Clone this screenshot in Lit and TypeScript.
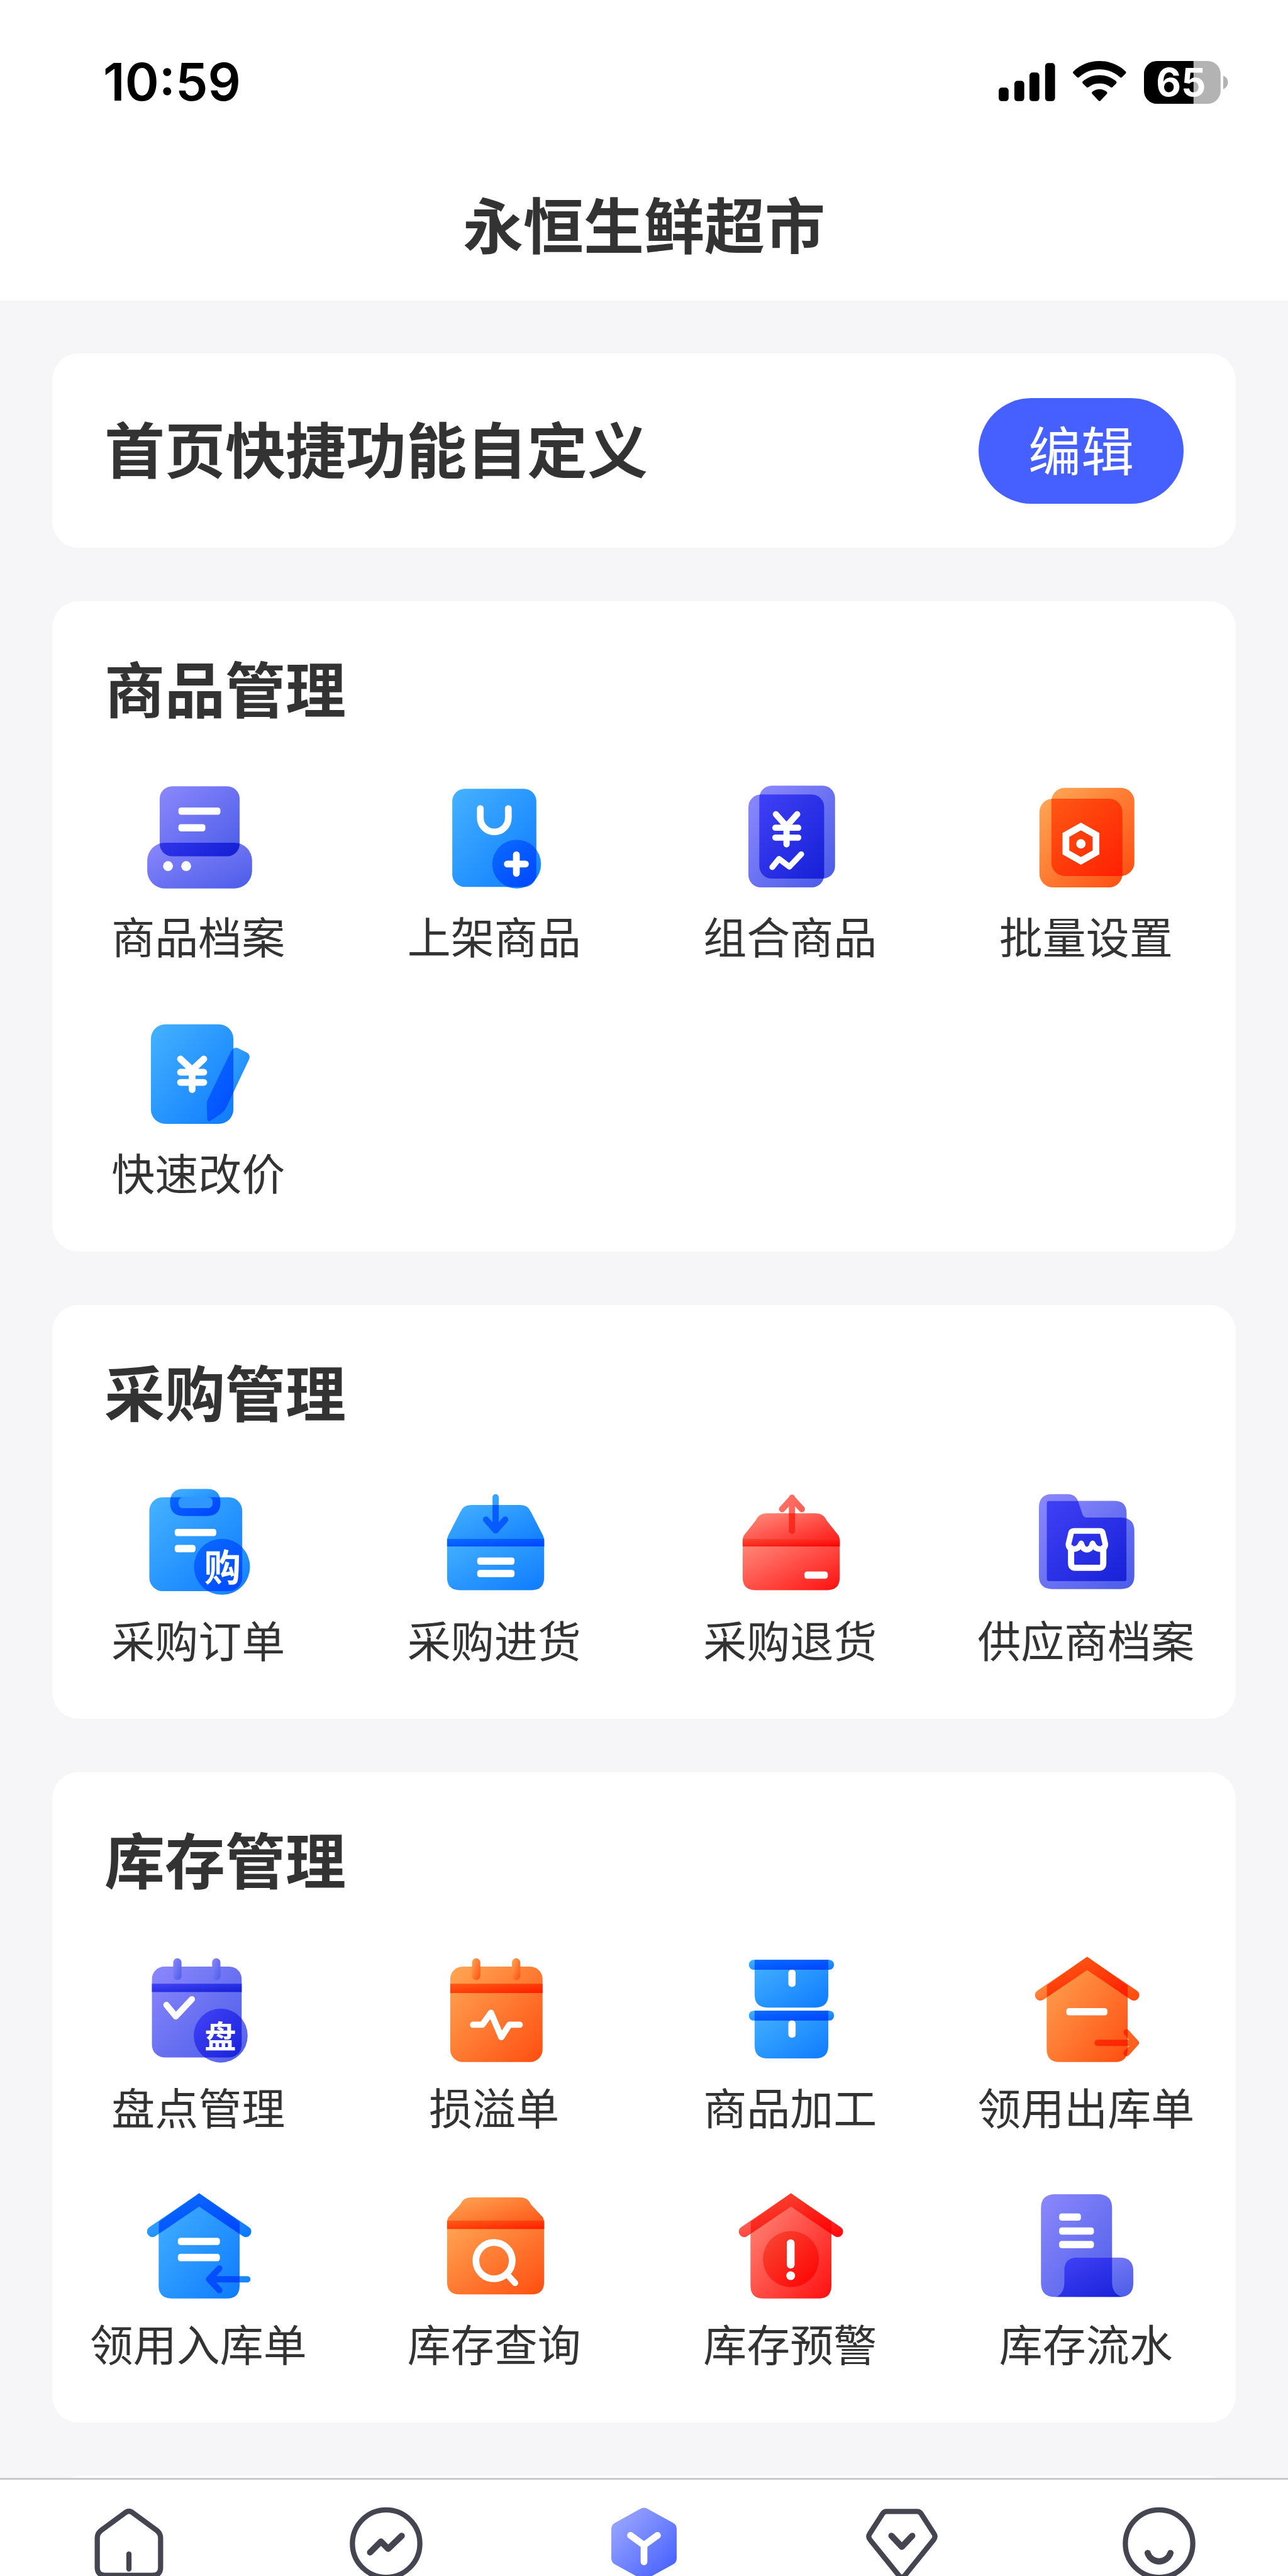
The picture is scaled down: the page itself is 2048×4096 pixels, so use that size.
import { LitElement, html, svg, css } from "lit";
import { customElement, property } from "lit/decorators.js";

/* ---------- Shared icon helpers ---------- */

type Tone = "blue" | "purple" | "orange" | "red";

const TONES: Record<Tone, [string, string, string, string]> = {
  // light start, light end, overlap start, overlap end
  blue: ["#45b2ff", "#0d7bff", "#0a6cff", "#0044ff"],
  purple: ["#8c88fc", "#4a5ce8", "#4343f8", "#141fd4"],
  orange: ["#ffa755", "#ff4e10", "#ff5c16", "#ff1c00"],
  red: ["#ff9080", "#ff1010", "#f64a36", "#ff0000"],
};

/* The part of `front` that lies over `back` is painted with the deep gradient. */
const overlay = (back: unknown, front: unknown, id: string) => svg`
  <clipPath id="clip-${id}">${back}</clipPath>
  <g fill="url(#light)">${front}</g>
  <g clip-path="url(#clip-${id})" fill="url(#deep)">${front}</g>`;

const layered = (back: unknown, front: unknown) => svg`
  <g fill="url(#light)">${back}</g>
  ${overlay(back, front, "a")}`;

const rect = (x: number, y: number, w: number, h: number, r = 0) =>
  svg`<rect x=${x} y=${y} width=${w} height=${h} rx=${r}></rect>`;

const circle = (x: number, y: number, r: number) =>
  svg`<circle cx=${x} cy=${y} r=${r}></circle>`;

const bar = (x1: number, x2: number, y: number) =>
  svg`<rect x=${x1} y=${y - 7} width=${x2 - x1} height="14" rx="5" fill="#fff"></rect>`;

const stroke = (d: string, w = 12) =>
  svg`<path d=${d} fill="none" stroke="#fff" stroke-width=${w} stroke-linecap="round" stroke-linejoin="round"></path>`;

const boxIcon = (top: number, bandTop: number, bandBottom: number, bottom: number) => {
  const lid = svg`<path d="M29 ${bandBottom}V${bandTop + 4}Q29 ${bandTop - 1} 31 ${bandTop - 6}L54 ${top + 14}Q60 ${top} 75 ${top}H170Q185 ${top} 191 ${top + 14}L214 ${bandTop - 6}Q216 ${bandTop - 1} 216 ${bandTop + 4}V${bandBottom}Z"></path>`;
  const body = svg`<path d="M29 ${bandTop}H216V${bottom - 24}Q216 ${bottom} 192 ${bottom}H53Q29 ${bottom} 29 ${bottom - 24}Z"></path>`;
  return svg`<g fill="url(#light)">${lid}${body}</g>
    <path d="M29 ${bandTop}H216V${bandBottom}H29Z" fill="url(#deep)"></path>`;
};

const houseBody = svg`<path d="M122 21L200 76V199Q200 224 175 224H69Q44 224 44 199V76Z"></path>`;
const ROOF = "M32 95L122 34L212 95";

const house = svg`
  <clipPath id="clip-house">${houseBody}</clipPath>
  <path d=${ROOF} fill="none" stroke="url(#light)" stroke-width="21" stroke-linecap="round"></path>
  <g fill="url(#light)">${houseBody}</g>
  <path d=${ROOF} clip-path="url(#clip-house)" fill="none" stroke="url(#deep)" stroke-width="21" stroke-linecap="round"></path>`;

const calendar = (x: number, w: number, bottom: number, band: number, p1: number, p2: number) => svg`
  <g fill="url(#light)">
    ${rect(x, 40, w, bottom - 40, 24)}
    ${rect(p1 - 8, 24, 16, 42, 8)}
    ${rect(p2 - 8, 24, 16, 42, 8)}
  </g>
  <rect x=${x} y="73" width=${w} height=${band} fill="url(#deep)"></rect>`;

const arrow = (d: string, clip: unknown) => svg`
  <clipPath id="clip-arrow">${clip}</clipPath>
  <path d=${d} fill="none" stroke="url(#flat)" stroke-width="12" stroke-linecap="round" stroke-linejoin="round"></path>
  <path d=${d} clip-path="url(#clip-arrow)" fill="none" stroke="url(#flatDeep)" stroke-width="12" stroke-linecap="round" stroke-linejoin="round"></path>`;

const orderBoard = rect(26, 36, 179, 181, 26);

const ICONS: Record<string, [Tone, unknown]> = {
  archive: ["purple", svg`
    ${layered(rect(22, 131, 202, 88, 34), rect(46, 22, 154, 135, 24))}
    ${bar(82, 163, 70)}${bar(82, 134, 102)}
    <circle cx="62" cy="176" r="9.5" fill="#fff"></circle>
    <circle cx="97" cy="176" r="9.5" fill="#fff"></circle>`],
  shelve: ["blue", svg`
    ${layered(rect(39, 27, 162, 189, 24), circle(163, 172, 47))}
    ${stroke("M93 65V83A27 27 0 0 0 147 83V65", 13)}
    ${stroke("M145 172H180M162.500 154V190", 13)}`],
  combo: ["purple", svg`
    ${layered(rect(61, 21, 146, 179, 24), rect(40, 38, 146, 179, 24))}
    ${stroke("M93 76L113.500 99L134 76M92 102H136M92 121H136M113.500 99V134", 12)}
    ${stroke("M86 178L99 162L119 177L142 153", 11)}`],
  batch: ["orange", svg`
    ${layered(rect(53, 25, 160, 170, 26), rect(30, 46, 160, 171, 26))}
    <path d="M110 99.500L139 116V149.500L110 166L81 149.500V116Z" fill="none" stroke="#fff" stroke-width="13"></path>
    <circle cx="110" cy="133" r="9" fill="#fff"></circle>`],
  reprice: ["blue", svg`
    ${layered(rect(29, 25, 159, 192, 28), svg`<path d="M138 171L183 78Q188 67 199 72L213 79Q222 84 218 93L174 186Q171 192 166 196L146 210Q138 216 137.500 206L136.500 179Q136.500 174 138 171Z"></path>`)}
    ${stroke("M86 92L108.500 113L131 92M86 117.500H131M86 137H131M108.500 113V151", 13)}`],
  order: ["blue", svg`
    ${layered(orderBoard, svg`<path fill-rule="evenodd" d="M92 20H137Q163 20 163 46Q163 72 137 72H92Q66 72 66 46Q66 20 92 20ZM92 37Q82 37 82 47Q82 57 92 57H138Q148 57 148 47Q148 37 138 37Z"></path>`)}
    <path d="M92 35H138Q150 37 148 47Q148 57 138 57H92Q82 57 82 47Q82 37 92 35Z" fill="#2f96ff"></path>
    ${bar(75, 155, 104)}${bar(75, 115, 135)}
    ${overlay(orderBoard, circle(166, 170, 54), "b")}
    <text x="167" y="197" font-size="71" class="badge">购</text>`],
  stockIn: ["blue", svg`
    ${boxIcon(51, 116, 131, 215)}
    ${arrow("M122.500 36V99M104 79L122.500 100L141 79", svg`<path d="M29 51H216V131H29Z"></path>`)}
    ${bar(87, 159, 159)}${bar(87, 159, 183)}`],
  stockBack: ["red", svg`
    ${boxIcon(67, 116, 131, 215)}
    ${arrow("M124 37V101M105 59L124 38L143 59", svg`<path d="M29 67H216V131H29Z"></path>`)}
    ${bar(148, 193, 186)}`],
  supplier: ["purple", svg`
    ${layered(
      svg`<path d="M49 43H174Q198 43 198 67V192Q198 198 192 198H50Q44 198 44 192V49Q44 43 49 43Z"></path>`,
      svg`<path d="M55 30H84Q100 30 105 45L113 69Q115 75 122 75H188Q213 76 213 101V187Q213 213 187 213H55Q29 213 29 187V56Q29 30 55 30Z"></path>`)}
    ${stroke("M97 101H147Q151 101 152 105L157 126Q157 136 147 136Q137 136 132.500 125Q129 137 121.500 137Q114 137 110.500 125Q106 136 96 136Q86 136 86 126L91 105Q92 101 97 101Z", 11)}
    ${stroke("M91 134V163Q91 172 99 172H145Q153 172 153 163V134", 12)}`],
  count: ["purple", svg`
    ${calendar(31, 173, 215, 16, 80, 155)}
    ${stroke("M59 114L77 136L108 103", 12)}
    ${overlay(rect(31, 40, 173, 175, 24), circle(163.5, 173, 52), "b")}
    <text x="163" y="197" font-size="61" class="badge">盘</text>`],
  loss: ["orange", svg`
    ${calendar(35, 178, 224, 18, 85, 162)}
    ${stroke("M79 152H97L113.500 129L133.500 176L149 152H169", 12)}`],
  process: ["blue", svg`
    ${[0, 98].map((dy) => svg`<g transform="translate(0 ${dy})">
      <path d="M52 27H194V94Q194 119 169 119H77Q52 119 52 94Z" fill="url(#light)"></path>
      <rect x="41" y="27" width="164" height="19" rx="9" fill="url(#light)"></rect>
      <rect x="52" y="27" width="142" height="19" fill="url(#deep)"></rect>
      <rect x="117" y="46" width="14" height="33" rx="6" fill="#fff"></rect>
    </g>`)}`],
  issueOut: ["orange", svg`
    ${house}
    ${arrow("M142 187H214M198 167L216 187L198 207", houseBody)}
    ${bar(82, 161, 127)}`],
  issueIn: ["blue", svg`
    ${house}
    ${arrow("M215 187H142M161 166L141 187L161 208", houseBody)}
    ${bar(81, 162, 114)}${bar(81, 162, 145)}`],
  query: ["orange", svg`
    ${boxIcon(29, 74, 90, 216)}
    <circle cx="119.500" cy="151" r="35" fill="none" stroke="#fff" stroke-width="13"></circle>
    ${stroke("M147 180L160 194", 12)}`],
  alert: ["red", svg`
    ${house}
    <circle cx="122" cy="148" r="54" fill="url(#deep)"></circle>
    <rect x="114" y="110" width="15" height="56" rx="7" fill="#fff"></rect>
    <circle cx="121.500" cy="180" r="8.500" fill="#fff"></circle>`],
  ledger: ["purple", svg`
    ${layered(
      svg`<path d="M60 23H143Q170 23 170 50V193Q170 215 190 221H60Q33 221 33 194V50Q33 23 60 23Z"></path>`,
      svg`<path d="M102 145H185Q211 145 211 171V194Q211 221 184 221H62Q78 214 78 193V170Q78 145 102 145Z"></path>`)}
    ${bar(68, 110, 67)}${bar(68, 135, 94)}${bar(68, 135, 120)}`],
};

@customElement("menu-icon")
export class MenuIcon extends LitElement {
  @property() name = "archive";

  static styles = css`
    :host { display: block; width: 198px; height: 198px; }
    .art { display: block; width: 100%; height: 100%; }
    .badge {
      font-family: "Noto Sans CJK SC", sans-serif;
      font-weight: 700;
      fill: #fff;
      text-anchor: middle;
    }
  `;

  render() {
    const [tone, art] = ICONS[this.name];
    const [l1, l2, d1, d2] = TONES[tone];
    return html`<svg class="art" viewBox="0 0 240 240" aria-hidden="true">
      <defs>
        <linearGradient id="light" x1="0" y1="0" x2="1" y2="1">
          <stop offset="0" stop-color=${l1}></stop><stop offset="1" stop-color=${l2}></stop>
        </linearGradient>
        <linearGradient id="deep" x1="0" y1="0" x2="1" y2="1">
          <stop offset="0" stop-color=${d1}></stop><stop offset="1" stop-color=${d2}></stop>
        </linearGradient>
        <linearGradient id="flat" gradientUnits="userSpaceOnUse" x1="20" y1="20" x2="280" y2="220">
          <stop offset="0" stop-color=${l1}></stop><stop offset="1" stop-color=${l2}></stop>
        </linearGradient>
        <linearGradient id="flatDeep" gradientUnits="userSpaceOnUse" x1="20" y1="20" x2="220" y2="220">
          <stop offset="0" stop-color=${d1}></stop><stop offset="1" stop-color=${d2}></stop>
        </linearGradient>
      </defs>
      ${art}
    </svg>`;
  }
}

/* ---------- Page data ---------- */

interface Group { title: string; items: [string, string][]; }

const GROUPS: Group[] = [
  { title: "商品管理", items: [
    ["archive", "商品档案"], ["shelve", "上架商品"], ["combo", "组合商品"],
    ["batch", "批量设置"], ["reprice", "快速改价"],
  ] },
  { title: "采购管理", items: [
    ["order", "采购订单"], ["stockIn", "采购进货"], ["stockBack", "采购退货"],
    ["supplier", "供应商档案"],
  ] },
  { title: "库存管理", items: [
    ["count", "盘点管理"], ["loss", "损溢单"], ["process", "商品加工"],
    ["issueOut", "领用出库单"], ["issueIn", "领用入库单"], ["query", "库存查询"],
    ["alert", "库存预警"], ["ledger", "库存流水"],
  ] },
];

const TABS: [string, unknown][] = [
  ["首页", svg`<path class="line" d="M72 18Q80 11 88 18L133 51Q141 57 141 66V123Q141 138 126 138H34Q19 138 19 123V66Q19 57 27 51Z"></path>
    <path class="line" d="M80 97V126"></path>`],
  ["报表", svg`<circle class="line" cx="80" cy="77" r="65"></circle>
    <path class="line bold" d="M49 94L70 73L84 87L110 62"></path>`],
  ["功能", svg`<defs><linearGradient id="tab" x1="0" y1="0" x2="1" y2="1">
      <stop offset="0" stop-color="#a3adff"></stop><stop offset="1" stop-color="#3f5aff"></stop>
    </linearGradient></defs>
    <path fill="url(#tab)" d="M73 10Q80 6 87 10L136 37Q143 41 143 49V105Q143 113 136 117L87 144Q80 148 73 144L24 117Q17 113 17 105V49Q17 41 24 37Z"></path>
    <path class="line white" d="M54 61L80 80L106 61M80 80V112"></path>`],
  ["会员", svg`<path class="line" d="M50 15H110Q114 15 117 19L142 58Q146 64 141 70L86 138Q80 145 74 138L19 70Q14 64 18 58L43 19Q46 15 50 15Z"></path>
    <path class="line bold" d="M60 62L80 83L100 62"></path>`],
  ["我的", svg`<circle class="line" cx="80" cy="77" r="65"></circle>
    <path class="line bold" d="M58 95A23 23 0 0 0 102 95"></path>`],
];

@customElement("app-root")
export class AppRoot extends LitElement {
  static styles = css`
    :host {
      display: block;
      font-family: "Noto Sans CJK SC", sans-serif;
      color: #333;
    }
    * { box-sizing: border-box; }
    a { color: inherit; text-decoration: none; }
    h1, h2, p { margin: 0; }
    .page {
      display: flex;
      flex-direction: column;
      height: 100vh;
      overflow: hidden;
      background: #f6f6f9;
    }
    .header { flex: none; background: #fff; padding-bottom: 64px; }
    .status {
      display: flex;
      align-items: center;
      justify-content: space-between;
      height: 262px;
      margin-bottom: 32px;
      padding: 0 96px 0 164px;
    }
    .time {
      font-family: Inter, "Liberation Sans", sans-serif;
      font-size: 82px;
      line-height: 100px;
      font-weight: 600;
      color: #000;
    }
    .system { display: flex; align-items: center; gap: 28px; }
    .system svg { display: block; height: 68px; overflow: visible; }
    .charge {
      font-family: Inter, "Liberation Sans", sans-serif;
      font-weight: 700;
      font-size: 74px;
      fill: #fff;
      text-anchor: middle;
    }
    .title {
      font-size: 96px;
      line-height: 120px;
      font-weight: 700;
      text-align: center;
    }
    .content {
      flex: 1;
      min-height: 0;
      overflow: hidden;
      display: flex;
      flex-direction: column;
      gap: 85px;
      padding: 84px 83px 0;
    }
    .card { flex: none; background: #fff; border-radius: 42px; }
    .custom {
      display: flex;
      align-items: center;
      justify-content: space-between;
      min-height: 309px;
      padding: 0 83px;
    }
    .heading { font-size: 96px; line-height: 120px; font-weight: 700; }
    .custom .heading { padding-bottom: 12px; }
    .edit {
      font: inherit;
      font-size: 84px;
      line-height: 120px;
      color: #fff;
      background: #465fff;
      border: 0;
      border-radius: 84px;
      padding: 20px 79px 28px;
    }
    .group { padding: 76px 0 85px; }
    .group .heading { padding: 0 83px; }
    .grid {
      display: grid;
      grid-template-columns: repeat(4, 1fr);
      row-gap: 79px;
      margin: 80px 3px 0 -3px;
    }
    .item {
      display: flex;
      flex-direction: column;
      align-items: center;
      gap: 15px;
    }
    .label { font-size: 69px; line-height: 84px; white-space: nowrap; }
    .next { min-height: 310px; }
    .tabs {
      flex: none;
      display: grid;
      grid-template-columns: repeat(5, 1fr);
      height: 156px;
      overflow: hidden;
      background: #fff;
      border-top: 3px solid #c9c9cb;
      padding-top: 38px;
    }
    .tab { display: flex; justify-content: center; }
    .tab svg { display: block; width: 132px; height: 132px; }
    .line {
      fill: none;
      stroke: #454552;
      stroke-width: 10;
      stroke-linecap: round;
      stroke-linejoin: round;
    }
    .bold { stroke-width: 12; }
    .white { stroke: #fff; stroke-width: 13; }
  `;

  private renderStatus() {
    return html`<div class="status">
      <p class="time">10:59</p>
      <div class="system">
        <svg viewBox="0 0 108 82" aria-hidden="true">
          <rect x="0" y="51" width="19" height="26" rx="6"></rect>
          <rect x="30" y="38" width="19" height="39" rx="6"></rect>
          <rect x="59" y="22" width="19" height="55" rx="6"></rect>
          <rect x="89" y="4" width="19" height="73" rx="6"></rect>
        </svg>
        <svg viewBox="0 0 102 82" aria-hidden="true">
          <path d="M51 0C71 0 89 8 101 20Q103 22 101 24L94 31Q92 33 90 31C79 21 66 16 51 16C36 16 23 21 12 31Q10 33 8 31L1 24Q-1 22 1 20C13 8 31 0 51 0Z"></path>
          <path d="M51 27C64 27 75 32 83 39Q85 41 83 43L76 50Q74 52 72 50C66 45 59 43 51 43C43 43 36 45 30 50Q28 52 26 50L19 43Q17 41 19 39C27 32 38 27 51 27Z"></path>
          <path d="M51 54C56 54 61 56 65 59Q67 61 65 63L53 76Q51 78 49 76L37 63Q35 61 37 59C41 56 46 54 51 54Z"></path>
        </svg>
        <svg viewBox="0 0 161 82" aria-hidden="true">
          <clipPath id="cell"><rect x="0" y="0" width="147" height="82" rx="25"></rect></clipPath>
          <g clip-path="url(#cell)">
            <rect x="0" y="0" width="147" height="82" fill="#b3b3b3"></rect>
            <rect x="0" y="0" width="95" height="82"></rect>
          </g>
          <path d="M152 28Q161 32 161 41Q161 50 152 54Z" fill="#b3b3b3"></path>
          <text class="charge" x="71" y="68">65</text>
        </svg>
      </div>
    </div>`;
  }

  render() {
    return html`<div class="page">
      <header class="header">
        ${this.renderStatus()}
        <h1 class="title">永恒生鲜超市</h1>
      </header>
      <main class="content">
        <section class="card custom">
          <h2 class="heading">首页快捷功能自定义</h2>
          <button class="edit" type="button">编辑</button>
        </section>
        ${GROUPS.map((g) => html`<section class="card group">
          <h2 class="heading">${g.title}</h2>
          <div class="grid">
            ${g.items.map(([icon, label]) => html`<a class="item" href="#">
              <menu-icon name=${icon}></menu-icon>
              <span class="label">${label}</span>
            </a>`)}
          </div>
        </section>`)}
        <section class="card next"></section>
      </main>
      <nav class="tabs">
        ${TABS.map(([name, art]) => html`<a class="tab" href="#" aria-label=${name}>
          <svg viewBox="0 0 160 160" aria-hidden="true">${art}</svg>
        </a>`)}
      </nav>
    </div>`;
  }
}
